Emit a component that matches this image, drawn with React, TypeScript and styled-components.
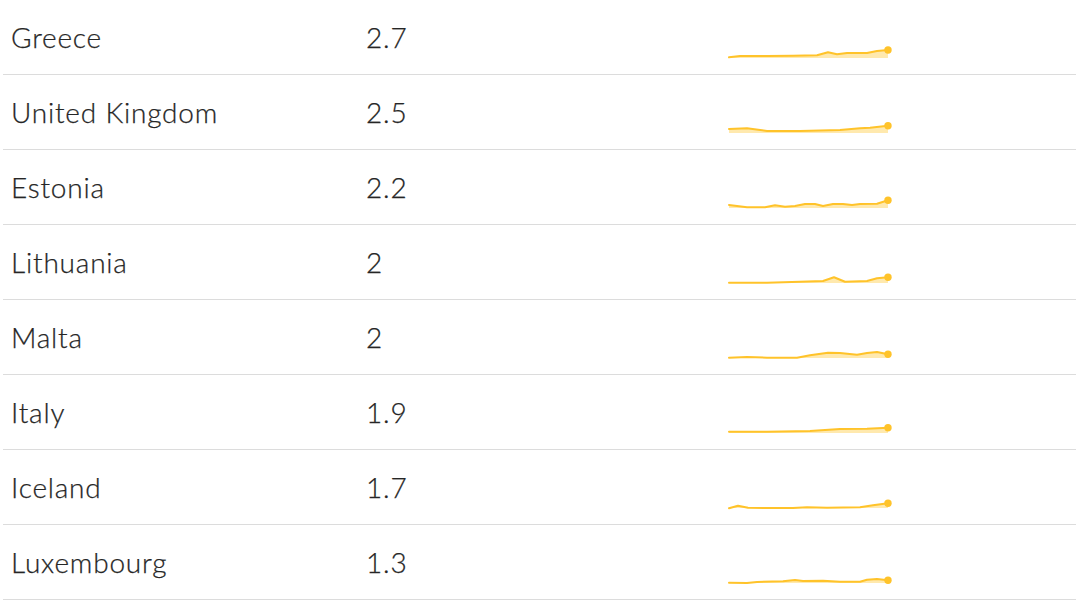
import React from "react";
import styled, { createGlobalStyle } from "styled-components";

const GlobalStyle = createGlobalStyle`
  html, body { margin: 0; padding: 0; background: #ffffff; }
  body { font-family: Lato, "Open Sans", "Noto Sans", sans-serif; }
`;

type Point = [number, number];

interface RowData {
  country: string;
  value: string;
  points: Point[];
}

const rows: RowData[] = [
  {
    country: "Greece",
    value: "2.7",
    points: [[729, 57.3], [740, 56], [767, 56], [793, 55.7], [817, 55.3], [828, 52.3], [837, 54.3], [847, 53], [867, 53], [877, 51], [888, 50]],
  },
  {
    country: "United Kingdom",
    value: "2.5",
    points: [[729, 54], [747, 53.3], [767, 56], [800, 56], [840, 55], [860, 53.3], [870, 52.7], [888, 50.7]],
  },
  {
    country: "Estonia",
    value: "2.2",
    points: [[729, 55], [747, 57.3], [765, 57.3], [775, 55.3], [785, 56.7], [795, 56], [805, 54], [815, 54], [823, 56], [833, 54], [843, 54], [852, 55], [860, 54], [877, 53.7], [888, 50.3]],
  },
  {
    country: "Lithuania",
    value: "2",
    points: [[729, 57.7], [767, 57.7], [800, 56.7], [823, 56], [834, 52.3], [845, 56.7], [867, 56], [877, 53.3], [888, 52.3]],
  },
  {
    country: "Malta",
    value: "2",
    points: [[729, 57.7], [747, 57], [767, 57.7], [797, 57.7], [810, 55.3], [828, 52.7], [840, 53], [857, 54.7], [867, 53], [877, 52], [888, 54.3]],
  },
  {
    country: "Italy",
    value: "1.9",
    points: [[729, 56.7], [767, 56.7], [810, 56], [840, 54], [867, 53.7], [888, 52.7]],
  },
  {
    country: "Iceland",
    value: "1.7",
    points: [[729, 58.3], [738, 55.7], [748, 57.7], [767, 58], [793, 58], [807, 57.3], [827, 57.7], [860, 57.3], [873, 55.3], [888, 53.3]],
  },
  {
    country: "Luxembourg",
    value: "1.3",
    points: [[729, 57.7], [747, 58], [757, 57], [783, 56.3], [795, 55], [803, 56], [823, 55.7], [840, 56.7], [860, 56.7], [867, 54.7], [877, 54], [888, 55.3]],
  },
];

const COL3_X = 720;
const BASE = 58;

const Table = styled.div`
  display: flex;
  flex-direction: column;
  padding: 0 4px 0 3px;
`;

const Row = styled.div`
  display: grid;
  grid-template-columns: 355px 362px 1fr;
  height: 75px;
  box-sizing: border-box;
  border-bottom: 1px solid #dcdcdc;
  align-items: center;
`;

const Cell = styled.div`
  padding-left: 8px;
  font-size: 28px;
  font-weight: 300;
  letter-spacing: 0.8px;
  color: #262626;
  line-height: 1;
  -webkit-text-stroke: 0.25px #262626;
`;

const ChartCell = styled.div`
  align-self: stretch;
`;

const Spark = styled.svg`
  display: block;
  width: 180px;
  height: 74px;
`;

function Sparkline({ points }: { points: Point[] }) {
  const pts = points.map(([x, y]) => [x - COL3_X, y] as Point);
  const line = pts.map(([x, y], i) => `${i ? "L" : "M"}${x} ${y}`).join(" ");
  const first = pts[0];
  const last = pts[pts.length - 1];
  const area = `${line} L${last[0]} ${BASE} L${first[0]} ${BASE} Z`;
  return (
    <Spark viewBox="0 0 180 74">
      <path d={area} fill="#ffe5a0" opacity={0.85} />
      <path d={line} fill="none" stroke="#ffc32a" strokeWidth={2} strokeLinejoin="round" strokeLinecap="round" />
      <circle cx={last[0]} cy={last[1]} r={3.7} fill="#ffc32a" />
    </Spark>
  );
}

export default function App() {
  return (
    <>
      <GlobalStyle />
      <Table>
        {rows.map((r) => (
          <Row key={r.country}>
            <Cell>{r.country}</Cell>
            <Cell>{r.value}</Cell>
            <ChartCell>
              <Sparkline points={r.points} />
            </ChartCell>
          </Row>
        ))}
      </Table>
    </>
  );
}
